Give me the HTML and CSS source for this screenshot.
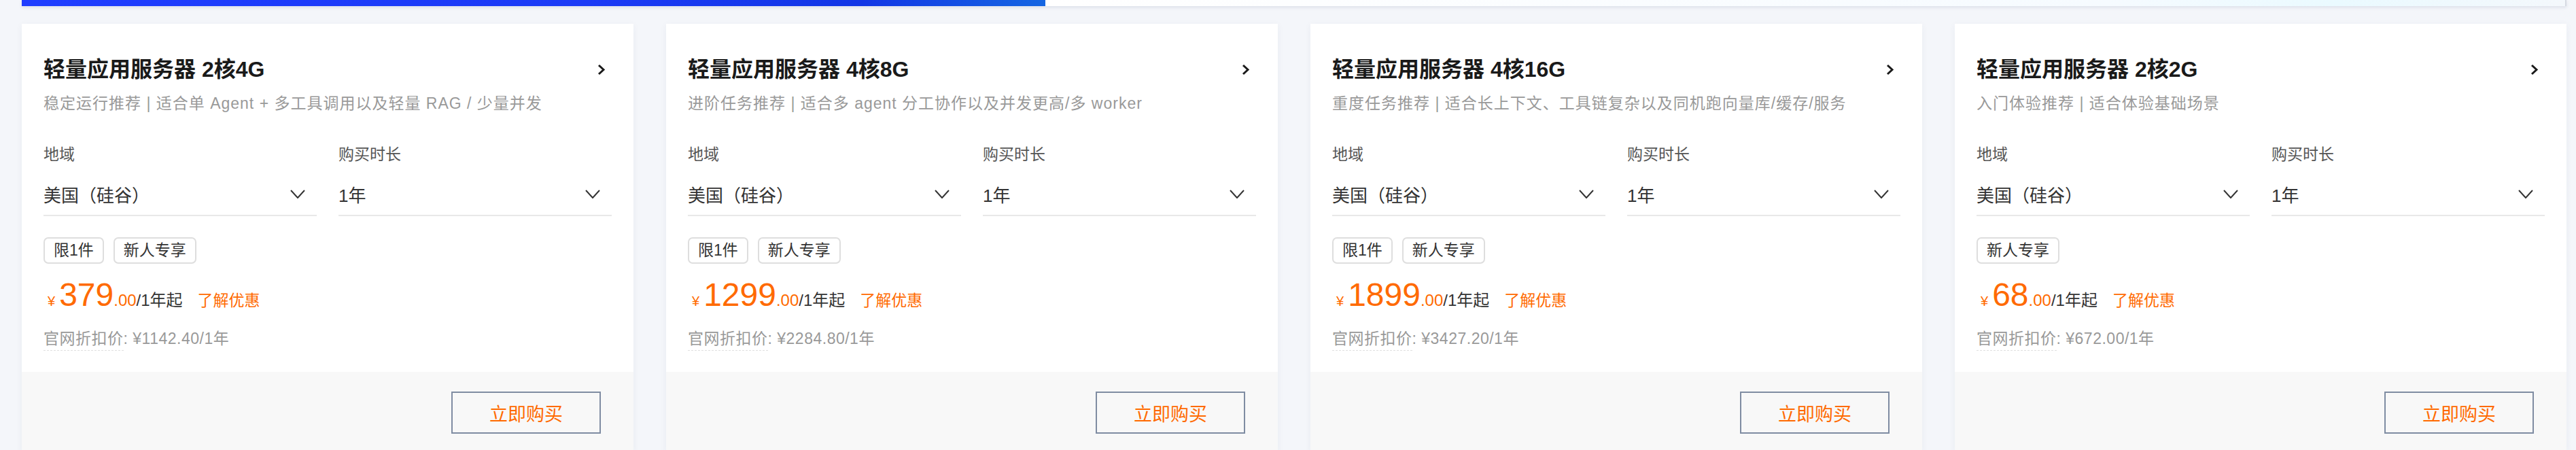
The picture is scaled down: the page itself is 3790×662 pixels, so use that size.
FILE: index.html
```html
<!DOCTYPE html>
<html lang="zh-CN">
<head>
    <meta charset="UTF-8">
    <meta name="viewport" content="width=device-width, initial-scale=1.0">
    <title>轻量应用服务器</title>
    <link rel="stylesheet" href="styles.css">
</head>
<body>
    <div class="page">
        <div class="banner-edge">
            <div class="banner-fill"></div>
            <div class="banner-rest"></div>
        </div>

        <div class="cards">
            <!-- 2核4G -->
            <div class="card">
                <div class="card-body">
                    <div class="card-title">
                        <span>轻量应用服务器 2核4G</span>
                        <svg class="arrow" width="12" height="17" viewBox="0 0 12 17"><path d="M2 2 L9 8.5 L2 15" fill="none" stroke="#1a1a1a" stroke-width="3"/></svg>
                    </div>
                    <div class="card-desc">稳定运行推荐 | 适合单 Agent + 多工具调用以及轻量 RAG / 少量并发</div>
                    <div class="fields">
                        <div class="field">
                            <div class="field-label">地域</div>
                            <div class="select">
                                <span>美国（硅谷）</span>
                                <svg width="22" height="13" viewBox="0 0 22 13"><path d="M1 1 L11 12 L21 1" fill="none" stroke="#333" stroke-width="2"/></svg>
                            </div>
                        </div>
                        <div class="field">
                            <div class="field-label">购买时长</div>
                            <div class="select">
                                <span>1年</span>
                                <svg width="22" height="13" viewBox="0 0 22 13"><path d="M1 1 L11 12 L21 1" fill="none" stroke="#333" stroke-width="2"/></svg>
                            </div>
                        </div>
                    </div>
                    <div class="tags">
                        <span class="tag">限1件</span>
                        <span class="tag">新人专享</span>
                    </div>
                    <div class="price">
                        <span class="yen">¥</span><span class="amount">379</span><span class="cents">.00</span><span class="unit">/1年起</span>
                        <a class="promo">了解优惠</a>
                    </div>
                    <div class="list-price"><span class="dashed">官网折扣价</span>: ¥1142.40/1年</div>
                </div>
                <div class="card-foot">
                    <button class="buy">立即购买</button>
                </div>
            </div>

            <!-- 4核8G -->
            <div class="card">
                <div class="card-body">
                    <div class="card-title">
                        <span>轻量应用服务器 4核8G</span>
                        <svg class="arrow" width="12" height="17" viewBox="0 0 12 17"><path d="M2 2 L9 8.5 L2 15" fill="none" stroke="#1a1a1a" stroke-width="3"/></svg>
                    </div>
                    <div class="card-desc">进阶任务推荐 | 适合多 agent 分工协作以及并发更高/多 worker</div>
                    <div class="fields">
                        <div class="field">
                            <div class="field-label">地域</div>
                            <div class="select">
                                <span>美国（硅谷）</span>
                                <svg width="22" height="13" viewBox="0 0 22 13"><path d="M1 1 L11 12 L21 1" fill="none" stroke="#333" stroke-width="2"/></svg>
                            </div>
                        </div>
                        <div class="field">
                            <div class="field-label">购买时长</div>
                            <div class="select">
                                <span>1年</span>
                                <svg width="22" height="13" viewBox="0 0 22 13"><path d="M1 1 L11 12 L21 1" fill="none" stroke="#333" stroke-width="2"/></svg>
                            </div>
                        </div>
                    </div>
                    <div class="tags">
                        <span class="tag">限1件</span>
                        <span class="tag">新人专享</span>
                    </div>
                    <div class="price">
                        <span class="yen">¥</span><span class="amount">1299</span><span class="cents">.00</span><span class="unit">/1年起</span>
                        <a class="promo">了解优惠</a>
                    </div>
                    <div class="list-price"><span class="dashed">官网折扣价</span>: ¥2284.80/1年</div>
                </div>
                <div class="card-foot">
                    <button class="buy">立即购买</button>
                </div>
            </div>

            <!-- 4核16G -->
            <div class="card">
                <div class="card-body">
                    <div class="card-title">
                        <span>轻量应用服务器 4核16G</span>
                        <svg class="arrow" width="12" height="17" viewBox="0 0 12 17"><path d="M2 2 L9 8.5 L2 15" fill="none" stroke="#1a1a1a" stroke-width="3"/></svg>
                    </div>
                    <div class="card-desc">重度任务推荐 | 适合长上下文、工具链复杂以及同机跑向量库/缓存/服务</div>
                    <div class="fields">
                        <div class="field">
                            <div class="field-label">地域</div>
                            <div class="select">
                                <span>美国（硅谷）</span>
                                <svg width="22" height="13" viewBox="0 0 22 13"><path d="M1 1 L11 12 L21 1" fill="none" stroke="#333" stroke-width="2"/></svg>
                            </div>
                        </div>
                        <div class="field">
                            <div class="field-label">购买时长</div>
                            <div class="select">
                                <span>1年</span>
                                <svg width="22" height="13" viewBox="0 0 22 13"><path d="M1 1 L11 12 L21 1" fill="none" stroke="#333" stroke-width="2"/></svg>
                            </div>
                        </div>
                    </div>
                    <div class="tags">
                        <span class="tag">限1件</span>
                        <span class="tag">新人专享</span>
                    </div>
                    <div class="price">
                        <span class="yen">¥</span><span class="amount">1899</span><span class="cents">.00</span><span class="unit">/1年起</span>
                        <a class="promo">了解优惠</a>
                    </div>
                    <div class="list-price"><span class="dashed">官网折扣价</span>: ¥3427.20/1年</div>
                </div>
                <div class="card-foot">
                    <button class="buy">立即购买</button>
                </div>
            </div>

            <!-- 2核2G -->
            <div class="card">
                <div class="card-body">
                    <div class="card-title">
                        <span>轻量应用服务器 2核2G</span>
                        <svg class="arrow" width="12" height="17" viewBox="0 0 12 17"><path d="M2 2 L9 8.5 L2 15" fill="none" stroke="#1a1a1a" stroke-width="3"/></svg>
                    </div>
                    <div class="card-desc">入门体验推荐 | 适合体验基础场景</div>
                    <div class="fields">
                        <div class="field">
                            <div class="field-label">地域</div>
                            <div class="select">
                                <span>美国（硅谷）</span>
                                <svg width="22" height="13" viewBox="0 0 22 13"><path d="M1 1 L11 12 L21 1" fill="none" stroke="#333" stroke-width="2"/></svg>
                            </div>
                        </div>
                        <div class="field">
                            <div class="field-label">购买时长</div>
                            <div class="select">
                                <span>1年</span>
                                <svg width="22" height="13" viewBox="0 0 22 13"><path d="M1 1 L11 12 L21 1" fill="none" stroke="#333" stroke-width="2"/></svg>
                            </div>
                        </div>
                    </div>
                    <div class="tags">
                        <span class="tag">新人专享</span>
                    </div>
                    <div class="price">
                        <span class="yen">¥</span><span class="amount">68</span><span class="cents">.00</span><span class="unit">/1年起</span>
                        <a class="promo">了解优惠</a>
                    </div>
                    <div class="list-price"><span class="dashed">官网折扣价</span>: ¥672.00/1年</div>
                </div>
                <div class="card-foot">
                    <button class="buy">立即购买</button>
                </div>
            </div>
        </div>
    </div>
</body>
</html>
```

FILE: styles.css
```css
body {
    margin: 0;
    background: #f4f6fa;
    font-family: "Liberation Sans", "Noto Sans CJK SC", sans-serif;
    color: #333;
}
.page {
    padding: 0 14px 0 32px;
}
.banner-edge {
    display: flex;
    height: 9px;
    box-shadow: 0 2px 5px rgba(40, 60, 110, 0.12);
}
.banner-fill {
    width: 1506px;
    background: linear-gradient(90deg, #1f3dff 0%, #1b3af6 55%, #1236e6 82%, #1566e2 100%);
}
.banner-rest {
    flex: 1;
    background: linear-gradient(90deg, #ffffff 0%, #f6fbff 70%, #eafaff 85%, #f4f8fc 100%);
    border-right: 2px solid #d6dae2;
}
.cards {
    display: grid;
    grid-template-columns: repeat(4, 1fr);
    gap: 48px;
    margin-top: 26px;
}
.card {
    background: #fff;
    box-shadow: 0 2px 10px rgba(30, 50, 90, 0.05);
}
.card-body {
    padding: 45px 32px 32px;
}
.card-title {
    display: flex;
    justify-content: space-between;
    align-items: center;
    font-size: 32px;
    line-height: 44px;
    font-weight: 600;
    color: #1a1a1a;
}
.card-title .arrow {
    margin-right: 9px;
}
.card-desc {
    margin-top: 11px;
    font-size: 23px;
    line-height: 34px;
    letter-spacing: 1px;
    color: #999;
}
.fields {
    display: grid;
    grid-template-columns: 1fr 1fr;
    gap: 32px;
    margin-top: 41px;
}
.field-label {
    font-size: 23px;
    line-height: 34px;
    color: #555;
}
.select {
    display: flex;
    justify-content: space-between;
    align-items: center;
    box-sizing: border-box;
    height: 64px;
    margin-top: 10px;
    padding-right: 17px;
    border-bottom: 2px solid #e8e8e8;
    font-size: 26px;
    color: #333;
}
.tags {
    display: flex;
    gap: 14px;
    margin-top: 31px;
}
.tag {
    height: 39px;
    box-sizing: border-box;
    padding: 0 13px;
    border: 2px solid #dedede;
    border-radius: 7px;
    font-size: 23px;
    line-height: 35px;
    color: #333;
}
.price {
    display: flex;
    align-items: baseline;
    margin-top: 20px;
    line-height: 52px;
    color: #ff6a00;
}
.yen {
    font-size: 20px;
    margin: 0 6px 0 6px;
}
.amount {
    font-size: 48px;
}
.cents {
    font-size: 24px;
}
.unit {
    font-size: 24px;
    color: #333;
}
.promo {
    margin-left: 22px;
    font-size: 23px;
    color: #ff6a00;
    cursor: pointer;
}
.list-price {
    margin-top: 12px;
    font-size: 23px;
    line-height: 34px;
    letter-spacing: 0.5px;
    color: #999;
}
.dashed {
    padding-bottom: 4px;
    border-bottom: 1px dashed #e0e0e0;
}
.card-foot {
    display: flex;
    justify-content: flex-end;
    align-items: center;
    height: 120px;
    padding-right: 48px;
    background: #f8f8f8;
}
.buy {
    width: 220px;
    height: 62px;
    background: transparent;
    border: 2px solid #7f8ca2;
    font-family: inherit;
    font-size: 27px;
    color: #ff6a00;
    cursor: pointer;
}
```
